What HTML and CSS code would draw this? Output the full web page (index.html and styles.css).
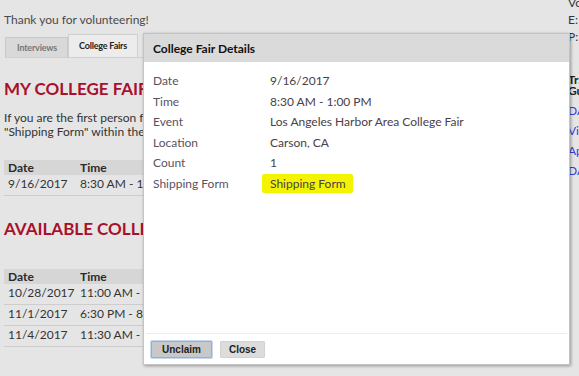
FILE: index.html
```html
<!DOCTYPE html>
<html>
<head>
<meta name="viewport" content="width=device-width, initial-scale=1">
<link rel="stylesheet" href="styles.css">
</head>
<body>
<div class="page">
  <div class="main">
    <p class="thanks">Thank you for volunteering!</p>
    <div class="tabs">
      <span class="tab">Interviews</span>
      <span class="tab tab-active">College Fairs</span>
    </div>
    <h2 class="heading">MY COLLEGE FAIRS</h2>
    <p class="intro">If you are the first person for this college fair, please download the<br>"Shipping Form" within the pop-up window.</p>
    <table class="fairs fairs-mine">
      <tr><th class="col-date">Date</th><th>Time</th></tr>
      <tr><td>9/16/2017</td><td>8:30 AM - 1:00 PM</td></tr>
    </table>
    <h2 class="heading">AVAILABLE COLLEGE FAIRS</h2>
    <table class="fairs fairs-open">
      <tr><th class="col-date">Date</th><th>Time</th></tr>
      <tr><td>10/28/2017</td><td>11:00 AM - 1:00 PM</td></tr>
      <tr><td>11/1/2017</td><td>6:30 PM - 8:30 PM</td></tr>
      <tr><td>11/4/2017</td><td>11:30 AM - 2:30 PM</td></tr>
    </table>
  </div>
  <div class="side">
    <div class="contact">Vo</div>
    <div class="contact">E:</div>
    <div class="contact">P:</div>
    <div class="side-title">Tra<br>Gu</div>
    <a class="side-link">DA</a>
    <a class="side-link">Vis</a>
    <a class="side-link">Ap</a>
    <a class="side-link">DA</a>
  </div>
</div>

<div class="dialog">
  <div class="dialog-head">College Fair Details</div>
  <div class="dialog-body">
    <div class="row"><span class="label">Date</span><span class="value">9/16/2017</span></div>
    <div class="row"><span class="label">Time</span><span class="value">8:30 AM - 1:00 PM</span></div>
    <div class="row"><span class="label">Event</span><span class="value">Los Angeles Harbor Area College Fair</span></div>
    <div class="row"><span class="label">Location</span><span class="value">Carson, CA</span></div>
    <div class="row"><span class="label">Count</span><span class="value">1</span></div>
    <div class="row"><span class="label">Shipping Form</span><span class="value"><span class="mark">Shipping Form</span></span></div>
  </div>
  <div class="dialog-foot">
    <button class="btn btn-primary">Unclaim</button>
    <button class="btn">Close</button>
  </div>
</div>
</body>
</html>
```

FILE: styles.css
```css
html, body {
  margin: 0;
  padding: 0;
  height: 100%;
  overflow: hidden;
}
body {
  background-color: #e5e5e5;
  font-family: Lato, "Open Sans", sans-serif;
  font-size: 12px;
  color: #3a3a3a;
}
.page {
  display: flex;
  width: 600px;
}
.main {
  width: 562px;
  padding-left: 4px;
  flex-shrink: 0;
}
.thanks {
  margin: 12px 0 0 0;
  font-size: 12px;
  color: #4a4a4a;
}
.tabs {
  display: flex;
  align-items: flex-end;
  margin-top: 7px;
  margin-left: 1px;
  height: 23px;
  border-bottom: 1px solid #cfcfcf;
}
.tab {
  display: inline-block;
  height: 19px;
  line-height: 19px;
  padding: 0 10px 0 11px;
  font-size: 9px;
  font-weight: bold;
  color: #777;
  background-color: #d9d9d9;
  border: 1px solid #c8c8c8;
  border-bottom: none;
  letter-spacing: -0.2px;
}
.tab-active {
  height: 22px;
  line-height: 22px;
  padding: 0 10px;
  color: #222;
  background-color: #ececec;
  border-color: #cfcfcf;
}
.heading {
  margin: 20px 0 0 0;
  font-size: 17px;
  font-weight: bold;
  color: #a8102c;
  letter-spacing: 0;
  white-space: nowrap;
}
.intro {
  margin: 12px 0 0 0;
  line-height: 14px;
  font-size: 12px;
  color: #333;
  white-space: nowrap;
}
.fairs {
  border-collapse: collapse;
  width: 520px;
  font-size: 12px;
}
.fairs-mine {
  margin-top: 21px;
}
.fairs-open {
  margin-top: 30px;
}
.fairs th {
  text-align: left;
  background-color: #d6d6d6;
  font-weight: bold;
  color: #2a2a2a;
  height: 15px;
  line-height: 15px;
  padding: 0 0 0 4px;
}
.fairs td {
  height: 17px;
  line-height: 14px;
  padding: 0 0 3px 4px;
  border-bottom: 1px solid #cdcdcd;
  color: #333;
}
.col-date {
  width: 68px;
}
.fairs-mine + .heading {
  margin-top: 22px;
}
.side {
  padding-left: 2px;
  margin-top: -3px;
}
.contact {
  height: 17px;
  line-height: 12px;
  font-size: 12px;
  color: #333;
}
.side-title {
  margin-top: 26px;
  font-weight: bold;
  line-height: 11px;
  color: #222;
}
.side-link {
  display: block;
  margin-top: 9px;
  height: 11px;
  line-height: 11px;
  color: #3a3ae0;
}
.dialog {
  position: absolute;
  left: 143px;
  top: 33px;
  width: 425px;
  height: 330px;
  background-color: #fff;
  border: 1px solid #c4c4c4;
  box-shadow: 1px 1px 3px rgba(0, 0, 0, 0.35);
  display: flex;
  flex-direction: column;
}
.dialog-head {
  height: 28px;
  line-height: 30px;
  padding-left: 9px;
  background-color: #dadada;
  font-weight: bold;
  font-size: 12px;
  color: #111;
}
.dialog-body {
  flex: 1;
  padding-top: 9px;
  padding-left: 7px;
  border-bottom: 1px solid #ececec;
  margin: 0 2px;
}
.row {
  display: flex;
  height: 20.6px;
  line-height: 20px;
  font-size: 12px;
}
.label {
  width: 117px;
  color: #5a5262;
}
.value {
  color: #4a4048;
}
.mark {
  background-color: #f4f400;
  padding: 2px 7px 2px 8px;
  margin-left: -8px;
  border-radius: 2px;
}
.dialog-foot {
  height: 30px;
  display: flex;
  align-items: center;
  padding-left: 7px;
  gap: 8px;
}
.btn {
  font-family: Arial, "Liberation Sans", sans-serif;
  font-size: 10px;
  font-weight: bold;
  height: 17px;
  padding: 0 8px;
  border: 1px solid #d2d2d2;
  background-color: #dcdcdc;
  color: #222;
  border-radius: 1px;
}
.btn-primary {
  background-color: #c8c8c8;
  border-color: #8ab0e8;
  box-shadow: 0 0 0 1px #c5d8f4;
  padding: 0 10px;
}
```
